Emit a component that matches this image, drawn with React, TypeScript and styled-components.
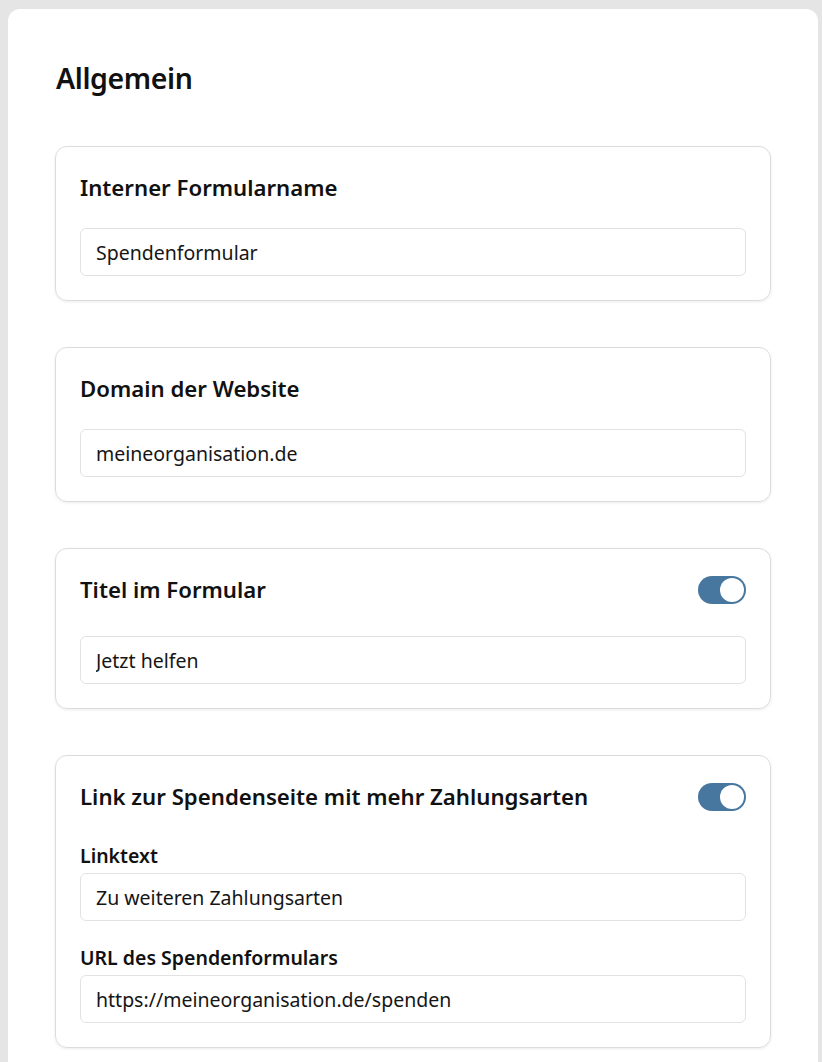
import React, { useState } from 'react'
import styled, { createGlobalStyle } from 'styled-components'

const GlobalStyle = createGlobalStyle`
  html, body {
    margin: 0;
    padding: 0;
    background: #e5e5e5;
  }
  body {
    font-family: "Noto Sans", "Open Sans", sans-serif;
    color: #111;
  }
  * {
    box-sizing: border-box;
  }
`

const Page = styled.div`
  padding: 9px 4px 0 8px;
`

const Panel = styled.div`
  background: #fff;
  border-radius: 12px;
  padding: 49px 47px 47px 47px;
`

const Heading = styled.h1`
  margin: 0 0 48px 1px;
  font-size: 28.5px;
  line-height: 40px;
  font-weight: 600;
  letter-spacing: -0.4px;
`

const Stack = styled.div`
  display: flex;
  flex-direction: column;
  gap: 46px;
`

const Card = styled.section`
  border: 1px solid #dcdcdc;
  border-radius: 12px;
  box-shadow: 0 1px 3px rgba(0, 0, 0, 0.08);
  padding: 24px;
  display: flex;
  flex-direction: column;
`

const CardHeader = styled.div`
  display: flex;
  align-items: flex-start;
  justify-content: space-between;
  margin-bottom: 25px;
`

const CardTitle = styled.h2`
  margin: 0;
  padding-top: 2px;
  font-size: 22.2px;
  line-height: 30px;
  font-weight: 600;
`

const SwitchWrap = styled.div`
  padding-top: 3px;
  height: 38px;
`

const Switch = styled.button<{ $on: boolean }>`
  position: relative;
  width: 48px;
  height: 28px;
  border: none;
  padding: 0;
  border-radius: 14px;
  background: ${p => (p.$on ? '#47779f' : '#c8c8c8')};
  cursor: pointer;
  display: block;

  &::after {
    content: '';
    position: absolute;
    top: 2px;
    left: ${p => (p.$on ? '22px' : '2px')};
    width: 24px;
    height: 24px;
    border-radius: 50%;
    background: #fff;
  }
`

const Fields = styled.div`
  display: flex;
  flex-direction: column;
  gap: 24px;
`

const Field = styled.label`
  display: flex;
  flex-direction: column;
  gap: 4px;
`

const FieldLabel = styled.span`
  font-size: 19.5px;
  line-height: 26px;
  font-weight: 600;
`

const TextInput = styled.input`
  width: 100%;
  height: 48px;
  border: 1px solid #e2e2e2;
  border-radius: 6px;
  padding: 0 15px;
  font-family: inherit;
  font-size: 19.5px;
  color: #151515;
  background: #fff;
  outline: none;
`

const Toggle = ({ initial }: { initial: boolean }) => {
  const [on, setOn] = useState(initial)
  return (
    <SwitchWrap>
      <Switch role="switch" aria-checked={on} $on={on} onClick={() => setOn(!on)} />
    </SwitchWrap>
  )
}

const App = () => {
  return (
    <Page>
      <GlobalStyle />
      <Panel>
        <Heading>Allgemein</Heading>
        <Stack>
          <Card>
            <CardHeader>
              <CardTitle>Interner Formularname</CardTitle>
            </CardHeader>
            <TextInput defaultValue="Spendenformular" />
          </Card>

          <Card>
            <CardHeader>
              <CardTitle>Domain der Website</CardTitle>
            </CardHeader>
            <TextInput defaultValue="meineorganisation.de" />
          </Card>

          <Card>
            <CardHeader>
              <CardTitle>Titel im Formular</CardTitle>
              <Toggle initial={true} />
            </CardHeader>
            <TextInput defaultValue="Jetzt helfen" />
          </Card>

          <Card>
            <CardHeader>
              <CardTitle>Link zur Spendenseite mit mehr Zahlungsarten</CardTitle>
              <Toggle initial={true} />
            </CardHeader>
            <Fields>
              <Field>
                <FieldLabel>Linktext</FieldLabel>
                <TextInput defaultValue="Zu weiteren Zahlungsarten" />
              </Field>
              <Field>
                <FieldLabel>URL des Spendenformulars</FieldLabel>
                <TextInput defaultValue="https://meineorganisation.de/spenden" />
              </Field>
            </Fields>
          </Card>
        </Stack>
      </Panel>
    </Page>
  )
}

export default App
